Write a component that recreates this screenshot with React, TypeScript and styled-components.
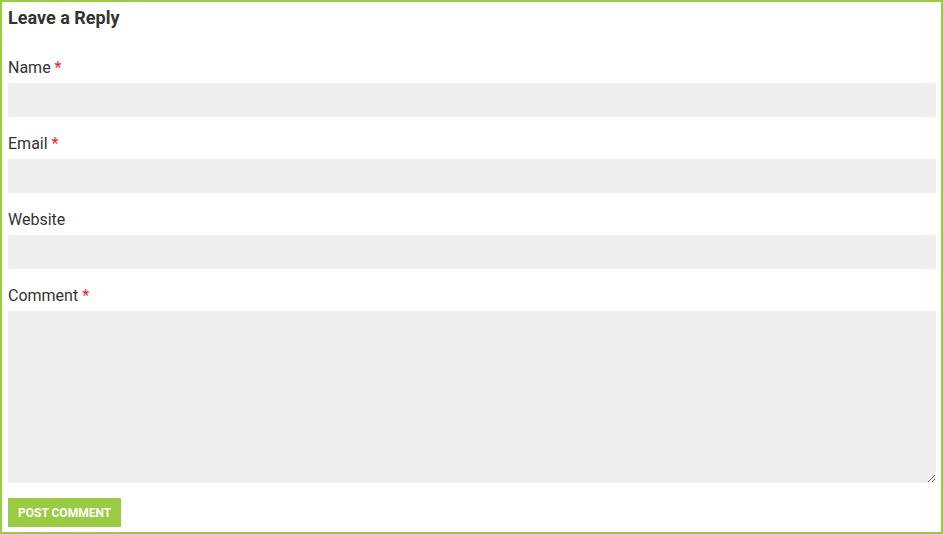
import React from "react";
import styled, { createGlobalStyle } from "styled-components";

const Global = createGlobalStyle`
  html, body { margin: 0; padding: 0; background: #fff; }
  body { font-family: Roboto, "Liberation Sans", Arial, sans-serif; color: #333; }
  * { box-sizing: border-box; }
`;

const Frame = styled.div`
  width: 943px;
  height: 534px;
  border: 2px solid #99cc44;
  padding: 2px 5px 0 6px;
  display: flex;
  flex-direction: column;
`;

const Title = styled.h3`
  margin: 0 0 24px;
  font-size: 18px;
  font-weight: 700;
  line-height: 27px;
  color: #333;
`;

const Form = styled.form`
  display: flex;
  flex-direction: column;
  gap: 14px;
`;

const Field = styled.div`
  display: flex;
  flex-direction: column;
  gap: 3px;
`;

const Label = styled.label`
  padding-top: 1px;
  font-size: 16px;
  line-height: 24px;
  color: #333;
`;

const Req = styled.span`
  color: #ee1c1c;
`;

const Input = styled.input`
  display: block;
  width: 100%;
  height: 34px;
  border: none;
  outline: none;
  background: #eeeeee;
  padding: 0 10px;
  font: inherit;
`;

const Area = styled.textarea`
  display: block;
  width: 100%;
  height: 172px;
  border: none;
  outline: none;
  background: #eeeeee;
  padding: 8px 10px;
  font: inherit;
  resize: vertical;
`;

const Submit = styled.button`
  align-self: flex-start;
  margin-top: 1px;
  height: 29px;
  padding: 0 10px;
  border: none;
  background: #99cc44;
  color: #fff;
  font-family: Roboto, "Liberation Sans", Arial, sans-serif;
  font-weight: 700;
  font-size: 12px;
  letter-spacing: 0;
  text-transform: uppercase;
  cursor: pointer;
`;

function Row({ label, required, children }: { label: string; required?: boolean; children: React.ReactNode }) {
  return (
    <Field>
      <Label>
        {label}
        {required && <Req> *</Req>}
      </Label>
      {children}
    </Field>
  );
}

export default function App() {
  return (
    <>
      <Global />
      <Frame>
        <Title>Leave a Reply</Title>
        <Form onSubmit={(e) => e.preventDefault()}>
          <Row label="Name" required>
            <Input type="text" />
          </Row>
          <Row label="Email" required>
            <Input type="email" />
          </Row>
          <Row label="Website">
            <Input type="url" />
          </Row>
          <Row label="Comment" required>
            <Area />
          </Row>
          <Submit type="submit">Post Comment</Submit>
        </Form>
      </Frame>
    </>
  );
}
